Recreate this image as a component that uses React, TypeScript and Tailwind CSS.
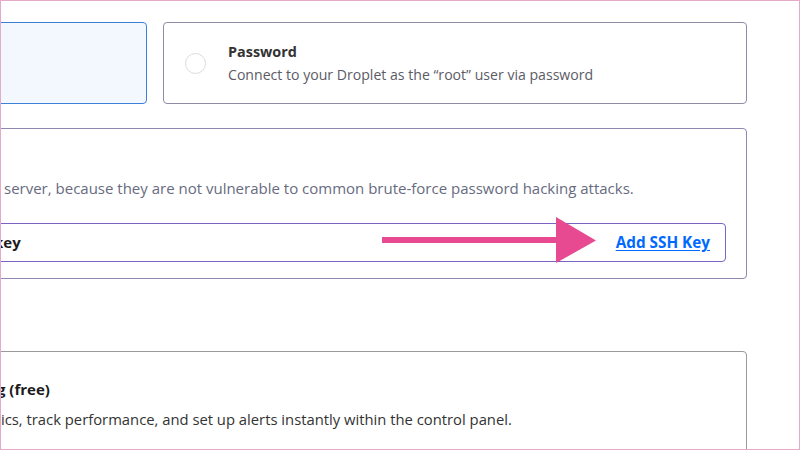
export default function App() {
  return (
    <div className="relative w-[800px] h-[450px] overflow-hidden bg-white border border-[#e6a9c9] font-['Open_Sans',sans-serif]">
      <div className="ml-[-21px] w-[767px]">
        {/* auth method options */}
        <div className="flex gap-[16px] mt-[21px]">
          <div className="w-[167px] h-[82px] rounded-[4px] border border-[#3e80d8] bg-[#f3f8ff]" />
          <div className="flex-1 h-[82px] rounded-[4px] border border-[#8e8da6] flex items-center">
            <div className="ml-[21px] w-[21px] h-[21px] rounded-full border border-[#dcdcdc]" />
            <div className="ml-[22px] flex flex-col gap-[3px]">
              <div className="text-[14.4px] leading-[20px] font-bold text-[#333]">Password</div>
              <div className="text-[14.1px] leading-[20px] text-[#5b5b66]">
                Connect to your Droplet as the “root” user via password
              </div>
            </div>
          </div>
        </div>

        {/* ssh keys panel */}
        <div className="mt-[24px] h-[151px] rounded-[4px] border border-[#8c88b2] pl-[23px] pr-5 flex flex-col">
          <p className="mt-[49px] text-[15px] leading-[20px] text-[#676b80]">
            server, because they are not vulnerable to common brute-force password hacking attacks.
          </p>
          <div className="mt-[25px] ml-[-60px] h-[39px] rounded-[4px] border border-[#7a63c2] flex items-center justify-between pl-[49px] pr-[15px]">
            <span className="text-[15px] font-bold text-[#1b1b1b]">key</span>
            <a href="#" className="text-[15.3px] font-bold text-[#0069ff] underline underline-offset-2">
              Add SSH Key
            </a>
          </div>
        </div>

        {/* monitoring panel */}
        <div className="mt-[72px] h-[140px] rounded-[4px] border border-[#9a9a9a] pl-[20px]">
          <div className="mt-[27px] ml-[-4px] text-[15px] leading-[20px] font-bold text-[#1b1b1b]">g (free)</div>
          <p className="mt-[10px] text-[14.8px] leading-[20px] text-[#333]">
            ics, track performance, and set up alerts instantly within the control panel.
          </p>
        </div>
      </div>

      {/* annotation arrow */}
      <svg className="absolute left-[381px] top-[216px] pointer-events-none" width="216" height="47" viewBox="0 0 216 47">
        <rect x="0" y="20" width="180" height="6" fill="#e84a91" />
        <polygon points="174,0 214,23.5 174,46" fill="#e84a91" />
      </svg>
    </div>
  );
}
